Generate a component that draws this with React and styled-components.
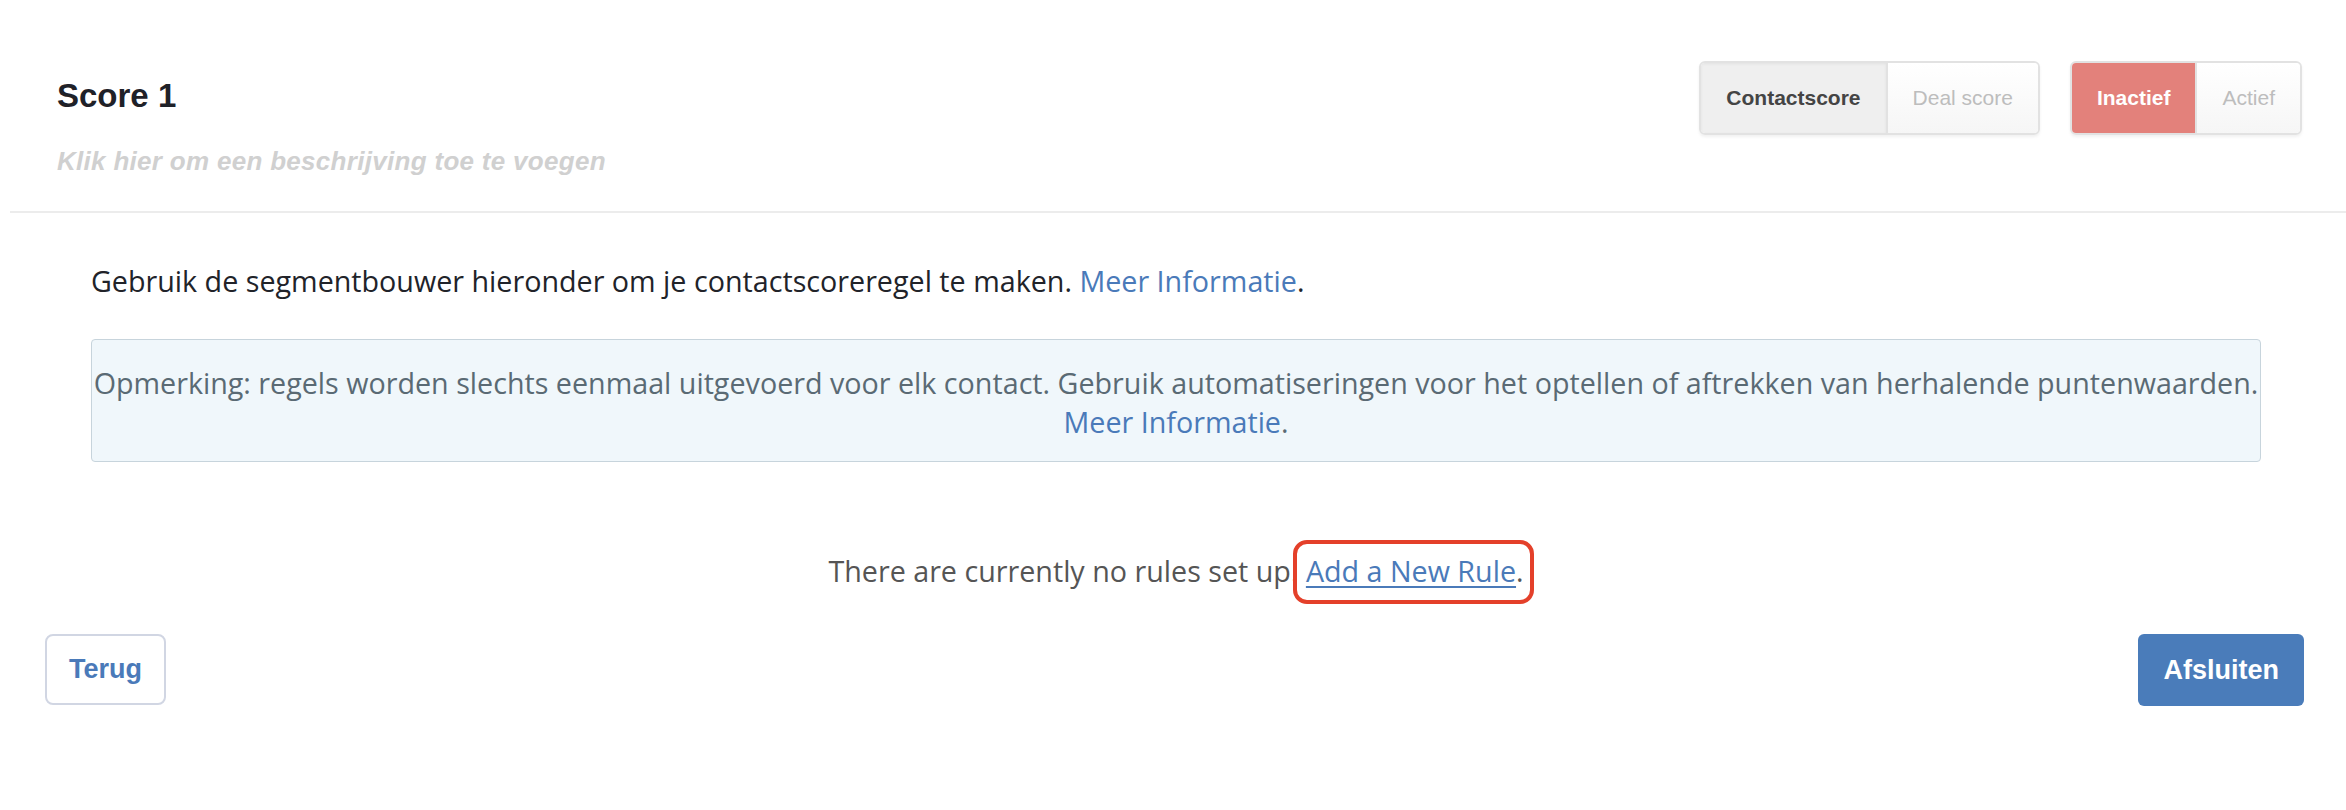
import React from 'react'
import styled, { createGlobalStyle, css } from 'styled-components'

const GlobalStyle = createGlobalStyle`
  html, body {
    margin: 0;
    padding: 0;
    background: #fff;
    font-family: "Liberation Sans", Arial, sans-serif;
    color: #212329;
  }
`

const bodyFont = css`
  font-family: "Open Sans", "Liberation Sans", Arial, sans-serif;
  font-size: 28.7px;
`

const Page = styled.div`
  width: 2346px;
  min-height: 810px;
  background: #fff;
`

const Header = styled.header`
  display: flex;
  justify-content: space-between;
  align-items: flex-start;
  padding: 61px 44px 34px 57px;
`

const TitleBlock = styled.div`
  display: flex;
  flex-direction: column;
  padding-top: 15px;
`

const Title = styled.h1`
  margin: 0;
  font-size: 33px;
  line-height: 40px;
  font-weight: 700;
  color: #1f2128;
`

const Description = styled.div`
  margin-top: 29px;
  font-size: 26px;
  line-height: 32px;
  font-weight: 700;
  font-style: italic;
  letter-spacing: 0.3px;
  color: #d0d0d0;
`

const ToggleRow = styled.div`
  display: flex;
  gap: 30px;
`

const ToggleGroup = styled.div`
  display: flex;
  height: 74px;
  box-sizing: border-box;
  border: 2px solid #e2e2e2;
  border-radius: 6px;
  overflow: hidden;
  box-shadow: 0 2px 3px rgba(0, 0, 0, 0.06);
`

const Segment = styled.div`
  display: flex;
  align-items: center;
  padding: 0 25px;
  font-size: 21px;
  color: #bdbdbd;
  background: linear-gradient(#ffffff, #f6f6f6);

  & + & {
    border-left: 2px solid #e2e2e2;
  }

  ${(p) =>
    p.$active &&
    css`
      background: #efefef;
      color: #444;
      font-weight: 700;
      box-shadow: inset 0 1px 3px rgba(0, 0, 0, 0.06);
    `}

  ${(p) =>
    p.$danger &&
    css`
      background: #e3817b;
      color: #fff;
      font-weight: 700;
    `}
`

const Divider = styled.hr`
  margin: 0 0 0 10px;
  border: 0;
  border-top: 2px solid #ececec;
`

const Content = styled.main`
  padding: 50px 85px 0 91px;
`

const Intro = styled.p`
  ${bodyFont};
  margin: 0;
  line-height: 36px;
  color: #212329;
`

const Link = styled.a`
  color: #4a7ab9;
  text-decoration: none;
  cursor: pointer;
`

const Notice = styled.div`
  ${bodyFont};
  margin-top: 40px;
  padding: 23px 0 20px;
  border: 1px solid #c7d4dc;
  border-radius: 4px;
  background: #f0f7fb;
  color: #5a6a74;
  line-height: 39px;
  text-align: center;
  white-space: nowrap;
`

const EmptyState = styled.p`
  ${bodyFont};
  margin: 91px 0 0;
  line-height: 36px;
  color: #555;
  text-align: center;
`

const Highlight = styled.span`
  position: relative;

  &::after {
    content: '';
    position: absolute;
    left: -13px;
    right: -10px;
    top: -11px;
    bottom: -14px;
    border: 4px solid #e4402a;
    border-radius: 14px;
    pointer-events: none;
  }
`

const UnderlinedLink = styled(Link)`
  text-decoration: underline;
  text-underline-offset: 4px;
`

const Footer = styled.footer`
  display: flex;
  justify-content: space-between;
  padding: 45px 42px 0 45px;
`

const Button = styled.button`
  height: 71px;
  padding: 0 22px;
  border: 2px solid #d1d6e3;
  border-radius: 8px;
  background: #fff;
  color: #4a7ab9;
  font-family: inherit;
  font-size: 27px;
  font-weight: 700;
  cursor: pointer;

  ${(p) =>
    p.$primary &&
    css`
      height: 72px;
      padding: 0 25px;
      border: 0;
      border-radius: 6px;
      background: #4a7cba;
      color: #fff;
    `}
`

export default function App() {
  return (
    <Page>
      <GlobalStyle />
      <Header>
        <TitleBlock>
          <Title>Score 1</Title>
          <Description>Klik hier om een beschrijving toe te voegen</Description>
        </TitleBlock>
        <ToggleRow>
          <ToggleGroup>
            <Segment $active>Contactscore</Segment>
            <Segment>Deal score</Segment>
          </ToggleGroup>
          <ToggleGroup>
            <Segment $danger>Inactief</Segment>
            <Segment>Actief</Segment>
          </ToggleGroup>
        </ToggleRow>
      </Header>
      <Divider />
      <Content>
        <Intro>
          Gebruik de segmentbouwer hieronder om je contactscoreregel te maken.{' '}
          <Link>Meer Informatie</Link>.
        </Intro>
        <Notice>
          Opmerking: regels worden slechts eenmaal uitgevoerd voor elk contact. Gebruik
          automatiseringen voor het optellen of aftrekken van herhalende puntenwaarden.
          <br />
          <Link>Meer Informatie</Link>.
        </Notice>
        <EmptyState>
          There are currently no rules set up.{' '}
          <Highlight>
            <UnderlinedLink>Add a New Rule</UnderlinedLink>.
          </Highlight>
        </EmptyState>
      </Content>
      <Footer>
        <Button>Terug</Button>
        <Button $primary>Afsluiten</Button>
      </Footer>
    </Page>
  )
}
